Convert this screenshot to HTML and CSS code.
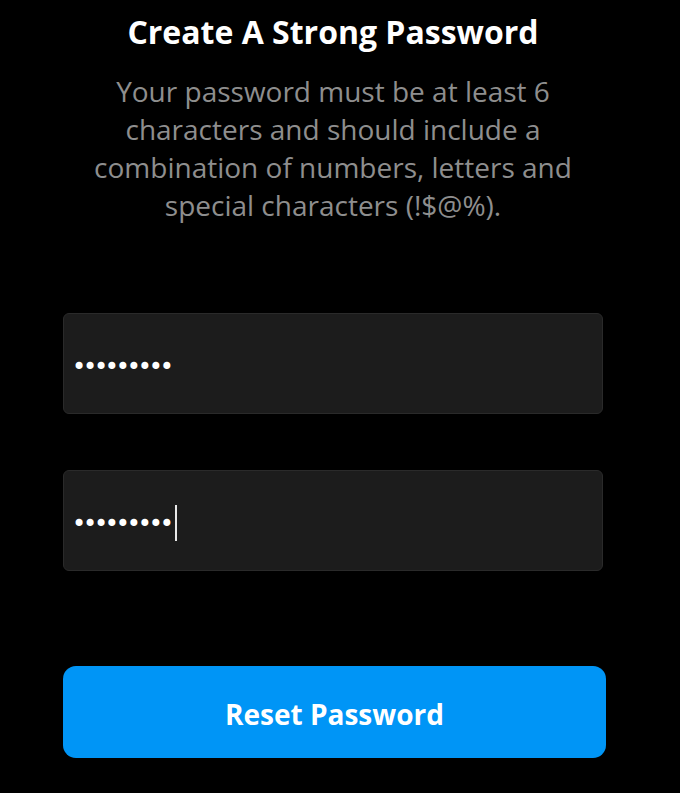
FILE: index.html
```html
<!DOCTYPE html>
<html lang="en">
<head>
<meta charset="utf-8">
<title>Create A Strong Password</title>
<link rel="stylesheet" href="styles.css">
</head>
<body>
<main class="page">
  <h1 class="title">Create A Strong Password</h1>
  <p class="desc">Your password must be at least 6 characters and should include a combination of numbers, letters and special characters (!$@%).</p>
  <form class="form">
    <div class="field"><span class="dots">•••••••••</span></div>
    <div class="field"><span class="dots">•••••••••</span><span class="caret"></span></div>
    <button type="button" class="btn">Reset Password</button>
  </form>
</main>
</body>
</html>
```
FILE: styles.css
```css
html, body {
  margin: 0;
  padding: 0;
  background: #000;
}
body {
  font-family: "Open Sans", "Noto Sans", sans-serif;
  color: #fff;
}
.page {
  width: 540px;
  margin-left: 63px;
  display: flex;
  flex-direction: column;
}
.title {
  margin: 12px 0 0;
  text-align: center;
  font-size: 32px;
  line-height: 40px;
  font-weight: 700;
  color: #fff;
}
.desc {
  margin: 20px 0 0;
  text-align: center;
  font-size: 28px;
  line-height: 38px;
  color: #8e8e8e;
}
.form {
  display: flex;
  flex-direction: column;
  margin-top: 89px;
}
.field {
  height: 99px;
  background: #1c1c1c;
  border: 1px solid #2a2a2a;
  border-radius: 6px;
  display: flex;
  align-items: center;
  padding-left: 8px;
  margin-bottom: 56px;
}
.dots {
  font-family: "DejaVu Sans", sans-serif;
  font-size: 24px;
  line-height: 30px;
  letter-spacing: -3.2px;
  color: #fff;
  position: relative;
  top: 3px;
}
.caret {
  width: 2px;
  height: 36px;
  background: #e8e8e8;
  margin-left: 4px;
  position: relative;
  top: 2px;
}
.btn {
  margin-top: 39px;
  width: 543px;
  height: 92px;
  padding: 4px 0 0;
  border: none;
  border-radius: 13px;
  background: #0095f6;
  color: #fff;
  font-family: "Open Sans", "Noto Sans", sans-serif;
  font-size: 28px;
  font-weight: 700;
  cursor: pointer;
}
```
